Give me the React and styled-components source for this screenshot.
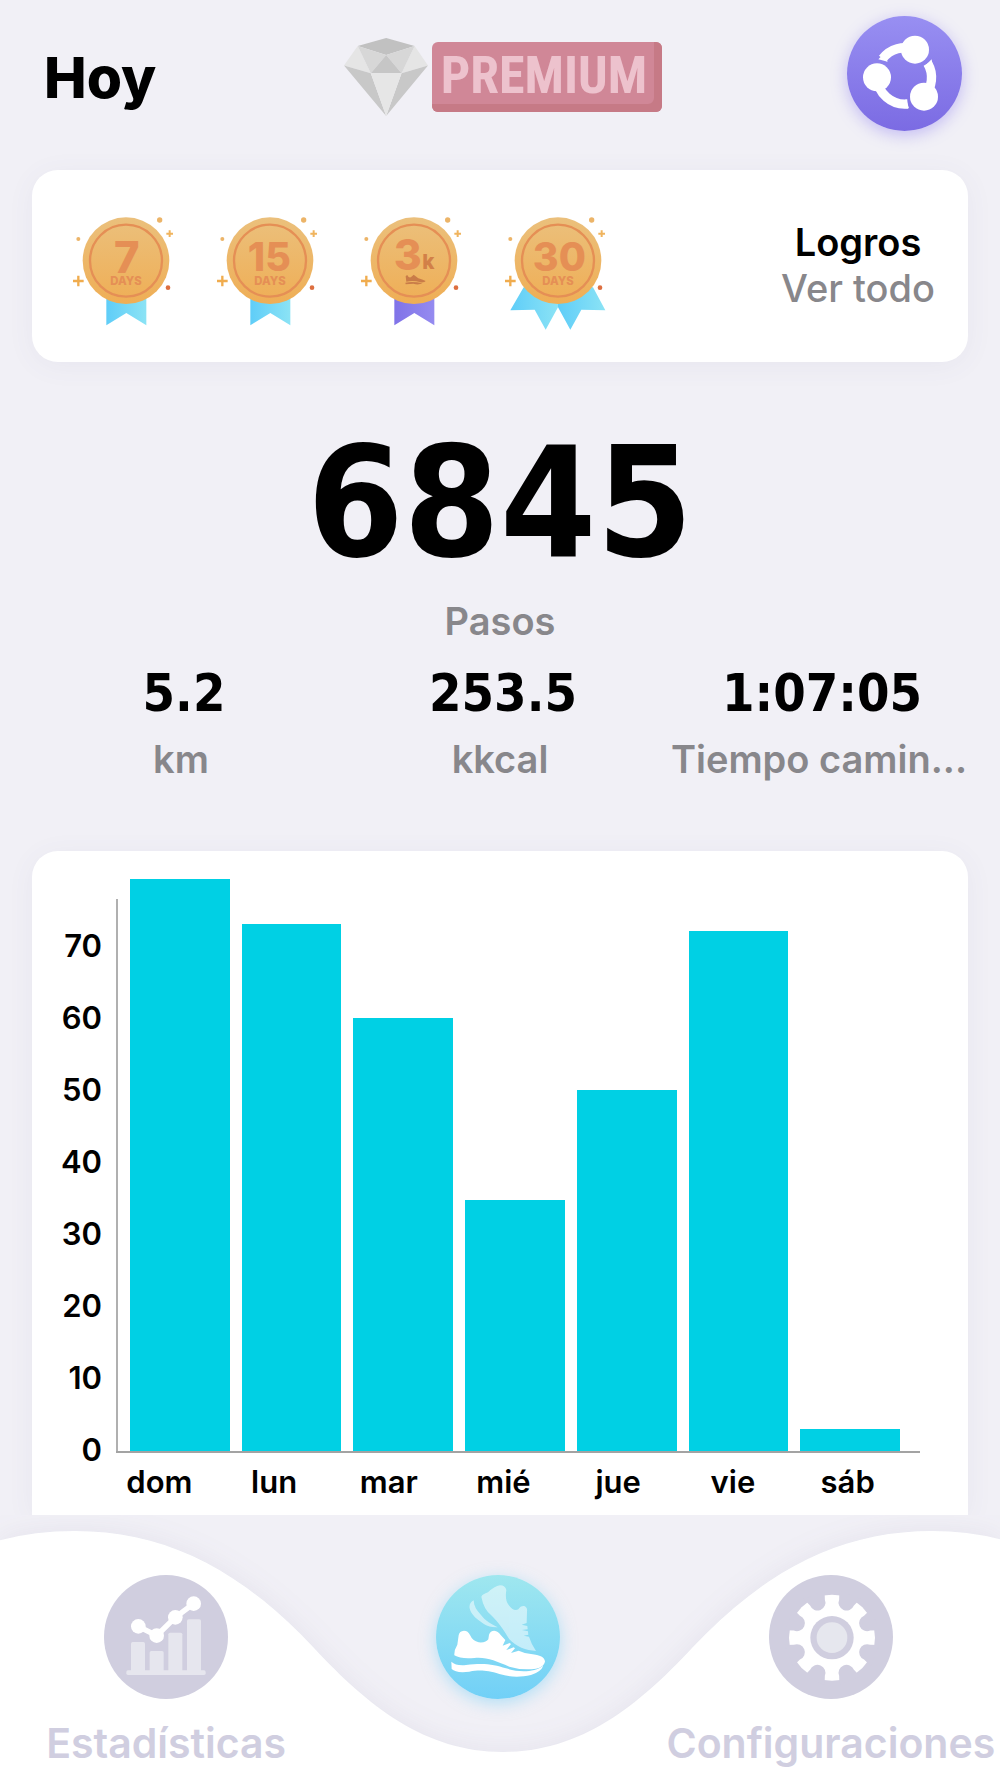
// src/App.jsx
import React from 'react';
import styled, { createGlobalStyle } from 'styled-components';

const GlobalStyle = createGlobalStyle`
  * {
    box-sizing: border-box;
  }

  body {
    margin: 0;
    background: #f1f0f6;
    font-family: Inter, 'Liberation Sans', sans-serif;
    color: #000;
  }
`;

const Page = styled.div`
  display: flex;
  flex-direction: column;
  min-height: 100vh;
`;

const Main = styled.main`
  flex: 1;
  padding: 0 32px;
  overflow: hidden;
`;

// Cabecera
const Header = styled.header`
  display: grid;
  grid-template-columns: 1fr auto 1fr;
  align-items: center;
  padding: 16px 6px 39px 12px;
`;

const Title = styled.h1`
  margin: 0;
  padding-top: 8px;
  font-size: 57px;
  line-height: 64px;
  font-weight: 800;
`;

const PremiumLink = styled.a`
  display: flex;
  align-items: center;
  gap: 4px;
  padding-top: 6px;
  text-decoration: none;
`;

const PremiumBadge = styled.span`
  display: flex;
  align-items: center;
  justify-content: center;
  width: 230px;
  height: 70px;
  padding: 0 6px 2px 0;
  border-radius: 6px;
  background: #d08797;
  box-shadow: inset -8px -8px 0 #c67a86;
  color: #edc2cd;
  font-family: 'Roboto Condensed', 'Liberation Sans Narrow', 'Liberation Sans', sans-serif;
  font-size: 52px;
  line-height: 60px;
  font-weight: 700;
`;

const ShareButton = styled.button`
  justify-self: end;
  width: 115px;
  height: 115px;
  padding: 0;
  border: none;
  border-radius: 50%;
  background: linear-gradient(#988ff2, #7b6be3);
  box-shadow: 0 4px 16px rgba(124, 108, 240, 0.4);
  cursor: pointer;

  svg {
    display: block;
    width: 100%;
    height: 100%;
  }
`;

// Tarjetas
const Card = styled.section`
  background: #fff;
  border-radius: 26px;
  box-shadow: 0 4px 28px rgba(90, 80, 130, 0.06);
`;

const AchievementsCard = styled(Card)`
  display: flex;
  align-items: flex-start;
  justify-content: space-between;
  padding: 44px 33px 30px 39px;
`;

const Medals = styled.div`
  display: flex;
  gap: 34px;

  svg {
    width: 110px;
    height: 118px;
  }
`;

const AchievementsLink = styled.a`
  display: flex;
  flex-direction: column;
  align-items: center;
  padding-top: 5px;
  font-size: 38px;
  line-height: 46px;
  font-weight: 600;
  color: #000;
  text-decoration: none;

  span {
    font-weight: 500;
    color: #88878b;
  }
`;

// Resumen del día
const Summary = styled.section`
  display: flex;
  flex-direction: column;
  align-items: center;
  padding: 65px 0 68px;
`;

const Steps = styled.div`
  font-family: 'DejaVu Sans Condensed', 'DejaVu Sans', sans-serif;
  font-size: 154px;
  line-height: 152px;
  font-weight: 700;
`;

const Label = styled.div`
  font-size: 38px;
  line-height: 48px;
  font-weight: 600;
  color: #88878b;
  white-space: nowrap;
`;

const StepsLabel = styled(Label)`
  margin-top: 18px;
`;

const StatsRow = styled.div`
  display: grid;
  grid-template-columns: repeat(3, minmax(0, 1fr));
  gap: 21px;
  width: 100%;
  margin-top: 18px;
`;

const Stat = styled.div`
  display: flex;
  flex-direction: column;
  align-items: center;
  gap: 12px;
`;

const StatValue = styled.div`
  padding-left: 6px;
  font-family: 'DejaVu Sans Condensed', 'DejaVu Sans', sans-serif;
  font-size: 52px;
  line-height: 60px;
  font-weight: 700;
`;

// Gráfico semanal
const ChartCard = styled(Card)`
  display: grid;
  grid-template-columns: 84px 1fr;
  padding: 28px 48px 13px 0;
  border-radius: 26px 26px 0 0;
`;

const YAxis = styled.div`
  display: flex;
  flex-direction: column;
  padding: 31px 14px 0 0;
  font-size: 31px;
  line-height: 72px;
  font-weight: 600;
  text-align: right;
`;

const Plot = styled.div`
  display: flex;
  height: 574px;
  border-bottom: 2px solid #a3a3a3;
`;

const AxisLine = styled.div`
  align-self: flex-end;
  width: 2px;
  height: calc(100% - 20px);
  background: #b0b0b0;
`;

const Bars = styled.div`
  flex: 1;
  display: flex;
  align-items: flex-end;
  gap: 12px;
  padding: 0 20px 0 12px;
`;

const Bar = styled.div`
  flex: 1;
  background: #00d0e4;
`;

const XAxis = styled.div`
  display: grid;
  grid-template-columns: repeat(7, 1fr);
  margin: 9px 15px 0 -14px;
  font-size: 31px;
  line-height: 40px;
  font-weight: 600;
  text-align: center;
`;

// Barra inferior
const Nav = styled.nav`
  position: relative;
  isolation: isolate;
  display: grid;
  grid-template-columns: repeat(3, minmax(0, 1fr));
  padding: 60px 3px 11px 0;
  overflow: hidden;
  background: #f1f0f6;
`;

const Wave = styled.svg`
  position: absolute;
  inset: 0;
  z-index: -1;
  width: 100%;
  height: 100%;
  filter: drop-shadow(0 0 14px rgba(90, 80, 130, 0.08));
`;

const NavItem = styled.a`
  display: flex;
  flex-direction: column;
  align-items: center;
  gap: 20px;
  font-size: 41px;
  line-height: 48px;
  font-weight: 600;
  color: #d0cee0;
  text-decoration: none;
  white-space: nowrap;
`;

const NavIcon = styled.span`
  width: 124px;
  height: 124px;
  border-radius: 50%;
  background: ${({ $active }) => ($active ? 'linear-gradient(#9fe7ef, #71d0f7)' : '#d0cedf')};
  box-shadow: ${({ $active }) => ($active ? '0 4px 16px rgba(113, 208, 247, 0.5)' : 'none')};

  svg {
    display: block;
    width: 100%;
    height: 100%;
  }
`;

const week = [
  { day: 'dom', value: 79.6 },
  { day: 'lun', value: 73.4 },
  { day: 'mar', value: 60.2 },
  { day: 'mié', value: 34.9 },
  { day: 'jue', value: 50.3 },
  { day: 'vie', value: 72.4 },
  { day: 'sáb', value: 3.1 },
];

const CHART_MAX = 79.6;
const ticks = [70, 60, 50, 40, 30, 20, 10, 0];

const stats = [
  { value: '5.2', label: 'km' },
  { value: '253.5', label: 'kkcal' },
  { value: '1:07:05', label: 'Tiempo camin...' },
];

const Diamond = () => (
  <svg width="84" height="78" viewBox="0 0 251 233" aria-hidden="true">
    <path d="M126 0 41 24 126 51 211 24Z" fill="#c1c1c1" />
    <path d="M41 24 0 82 80 105ZM211 24 251 82 172 105Z" fill="#e5e5e5" />
    <path d="M41 24 126 51 80 105ZM211 24 126 51 172 105Z" fill="#d7d7d7" />
    <path d="M126 51 80 105H172Z" fill="#c6c6c6" />
    <path d="M0 82 80 105 126 233ZM251 82 172 105 126 233Z" fill="#c8c8c8" />
    <path d="M80 105H172L126 233Z" fill="#e6e6e6" />
  </svg>
);

const ShareIcon = () => (
  <svg viewBox="0 0 345 345" aria-hidden="true">
    <g fill="none" stroke="#fff" strokeWidth="28">
      <path d="M107 128A84 84 0 0 1 204 101" />
      <path d="M242 142A84 84 0 0 1 231 242" />
      <path d="M182 264A84 84 0 0 1 90 184" />
    </g>
    <g fill="#fff">
      <path d="M94 130 122 137 112 112ZM254 130 231 152 258 158ZM177 249 186 277 166 276Z" />
      <circle cx="204" cy="101" r="42" />
      <circle cx="90" cy="184" r="42" />
      <circle cx="231" cy="242" r="42" />
    </g>
  </svg>
);

const Medal = ({ id, color = '#5fcdf8', colorEnd = '#8be3f5', wide, title, children }) => (
  <svg viewBox="0 0 330 354" role="img" aria-label={title}>
    <defs>
      <linearGradient id={`gold-${id}`} x1="0" y1="0" x2="0" y2="1">
        <stop offset="0" stopColor="#ebc07c" />
        <stop offset="1" stopColor="#efae55" />
      </linearGradient>
      <linearGradient id={`ribbon-${id}`}>
        <stop offset="0" stopColor={color} />
        <stop offset="1" stopColor={colorEnd} />
      </linearGradient>
    </defs>
    <g fill={`url(#ribbon-${id})`}>
      {wide ? (
        <>
          <path d="M62 220 22 289 95 287 128 347 165 280V200Z" />
          <path d="M270 220 307 289 235 287 202 347 165 280V200Z" />
        </>
      ) : (
        <path d="M106 240V334L166 297 226 334V240Z" />
      )}
    </g>
    <circle cx="165" cy="140" r="130" fill={`url(#gold-${id})`} />
    <circle cx="165" cy="140" r="108" fill="none" stroke="#e58f55" strokeWidth="7" />
    <g fill="#ecb468">
      <circle cx="266" cy="18" r="8" />
      <circle cx="22" cy="75" r="6" />
    </g>
    <circle cx="291" cy="221" r="7" fill="#dd6f40" />
    <path d="M286 59H306M296 49V69" stroke="#f0b45e" strokeWidth="6" />
    <path d="M6 201H38M22 185V217" stroke="#f0ac4e" strokeWidth="7" />
    <g fill="#e58f55" textAnchor="middle" fontWeight="800">
      {children}
    </g>
  </svg>
);

const StatsIcon = () => (
  <svg viewBox="40 45 372 372" aria-hidden="true">
    <g fill="#e6e6ee">
      <rect x="121" y="246" width="42" height="90" rx="5" />
      <rect x="177" y="273" width="42" height="63" rx="5" />
      <rect x="233" y="218" width="42" height="118" rx="5" />
      <rect x="289" y="178" width="42" height="158" rx="5" />
      <rect x="107" y="331" width="238" height="14" rx="5" />
    </g>
    <path d="M143 199 198 227 254 172 309 131" fill="none" stroke="#fff" strokeWidth="16" />
    <g fill="#fff">
      <circle cx="143" cy="199" r="22" />
      <circle cx="198" cy="227" r="22" />
      <circle cx="254" cy="172" r="22" />
      <circle cx="309" cy="131" r="22" />
    </g>
  </svg>
);

const ShoesIcon = () => (
  <svg viewBox="50 45 372 372" aria-hidden="true">
    <g fill="#fff" opacity="0.52">
      <path d="M186 110Q190 102 206 97 225 79 242 76 258 76 261 90 256 120 268 135 282 155 297 148 303 137 315 138 325 142 323 155L322 189 307 194 324 198 325 208 308 210 326 214 327 224 313 227 329 230Q335 250 350 273C320 272 290 260 270 238 250 205 240 190 215 165Q193 147 186 110Z" />
      <path d="M163 121Q148 130 151 145C155 165 175 180 195 193Q210 203 235 202C215 190 200 185 185 165Q163 143 163 121Z" />
    </g>
    <g fill="#fff">
      <path d="M118 226Q120 213 134 212 146 212 152 225 160 243 178 247 200 249 207 238L209 224Q213 212 225 212 236 213 244 225L258 240 250 257 271 249 275 252 261 270 283 262 287 265 275 279 298 272Q315 280 335 282 376 286 377 305 373 322 350 326 310 332 270 320C230 303 200 290 165 294Q125 298 105 286 104 270 114 254Z" />
      <path d="M96 305Q110 318 140 315C200 308 225 315 260 325 300 338 345 337 372 317Q365 335 335 345C300 353 270 351 240 342 200 330 180 330 150 335Q110 340 97 327Z" />
    </g>
  </svg>
);

const GearIcon = () => (
  <svg viewBox="44 45 372 372" aria-hidden="true">
    <g transform="translate(233 233)">
      <circle r="129" fill="#fff" />
      <g fill="#d0cedf">
        {[0, 1, 2, 3, 4, 5, 6, 7].map((i) => (
          <path
            key={i}
            d="M-24-114A24 24 0 0 0 24-114L34-140H-34Z"
            transform={`rotate(${i * 45 + 22.5})`}
          />
        ))}
        <circle r="65" />
      </g>
      <circle r="46" fill="#e6e7ee" />
    </g>
  </svg>
);

const WeekChart = () => (
  <ChartCard aria-label="Pasos de la semana">
    <YAxis>
      {ticks.map((tick) => (
        <span key={tick}>{tick}</span>
      ))}
    </YAxis>
    <div>
      <Plot>
        <AxisLine />
        <Bars>
          {week.map(({ day, value }) => (
            <Bar key={day} style={{ height: `${(value / CHART_MAX) * 100}%` }} />
          ))}
        </Bars>
      </Plot>
      <XAxis>
        {week.map(({ day }) => (
          <span key={day}>{day}</span>
        ))}
      </XAxis>
    </div>
  </ChartCard>
);

const BottomNav = () => (
  <Nav>
    <Wave viewBox="0 0 1000 263" preserveAspectRatio="none" aria-hidden="true">
      <path
        fill="#fff"
        d="M-40 40Q10 16 75 16C165 16 240 54 314 133 368 191 425 237 503 237S638 191 692 133C766 54 842 16 932 16Q990 16 1040 38V300H-40Z"
      />
    </Wave>
    <NavItem href="#estadisticas">
      <NavIcon>
        <StatsIcon />
      </NavIcon>
      Estadísticas
    </NavItem>
    <NavItem href="#hoy" aria-label="Hoy">
      <NavIcon $active>
        <ShoesIcon />
      </NavIcon>
    </NavItem>
    <NavItem href="#configuraciones">
      <NavIcon>
        <GearIcon />
      </NavIcon>
      Configuraciones
    </NavItem>
  </Nav>
);

const App = () => {
  return (
    <Page>
      <GlobalStyle />
      <Main>
        <Header>
          <Title>Hoy</Title>
          <PremiumLink href="#premium">
            <Diamond />
            <PremiumBadge>PREMIUM</PremiumBadge>
          </PremiumLink>
          <ShareButton type="button" aria-label="Compartir">
            <ShareIcon />
          </ShareButton>
        </Header>

        <AchievementsCard>
          <Medals>
            <Medal id="7" title="7 días">
              <text x="167" y="177" fontSize="130">7</text>
              <text x="165" y="214" fontSize="34">DAYS</text>
            </Medal>
            <Medal id="15" title="15 días">
              <text x="163" y="172" fontSize="118">15</text>
              <text x="165" y="214" fontSize="34">DAYS</text>
            </Medal>
            <Medal id="3k" title="3000 pasos" color="#8073e8" colorEnd="#958bf0">
              <text x="146" y="168" fontSize="128">3</text>
              <text x="208" y="166" fontSize="62" fill="#d28048">k</text>
              <path
                d="M140 187Q145 180 148 188 154 193 159 187L164 182 178 193Q190 197 200 201 198 206 184 205 164 198 142 203ZM139 206Q162 201 190 208 178 214 163 209L140 211Z"
                fill="#c97c48"
              />
            </Medal>
            <Medal id="30" title="30 días" wide>
              <text x="169" y="172" fontSize="118">30</text>
              <text x="165" y="214" fontSize="34">DAYS</text>
            </Medal>
          </Medals>
          <AchievementsLink href="#logros">
            Logros
            <span>Ver todo</span>
          </AchievementsLink>
        </AchievementsCard>

        <Summary>
          <Steps>6845</Steps>
          <StepsLabel>Pasos</StepsLabel>
          <StatsRow>
            {stats.map(({ value, label }) => (
              <Stat key={label}>
                <StatValue>{value}</StatValue>
                <Label>{label}</Label>
              </Stat>
            ))}
          </StatsRow>
        </Summary>

        <WeekChart />
      </Main>
      <BottomNav />
    </Page>
  );
};

export default App;
